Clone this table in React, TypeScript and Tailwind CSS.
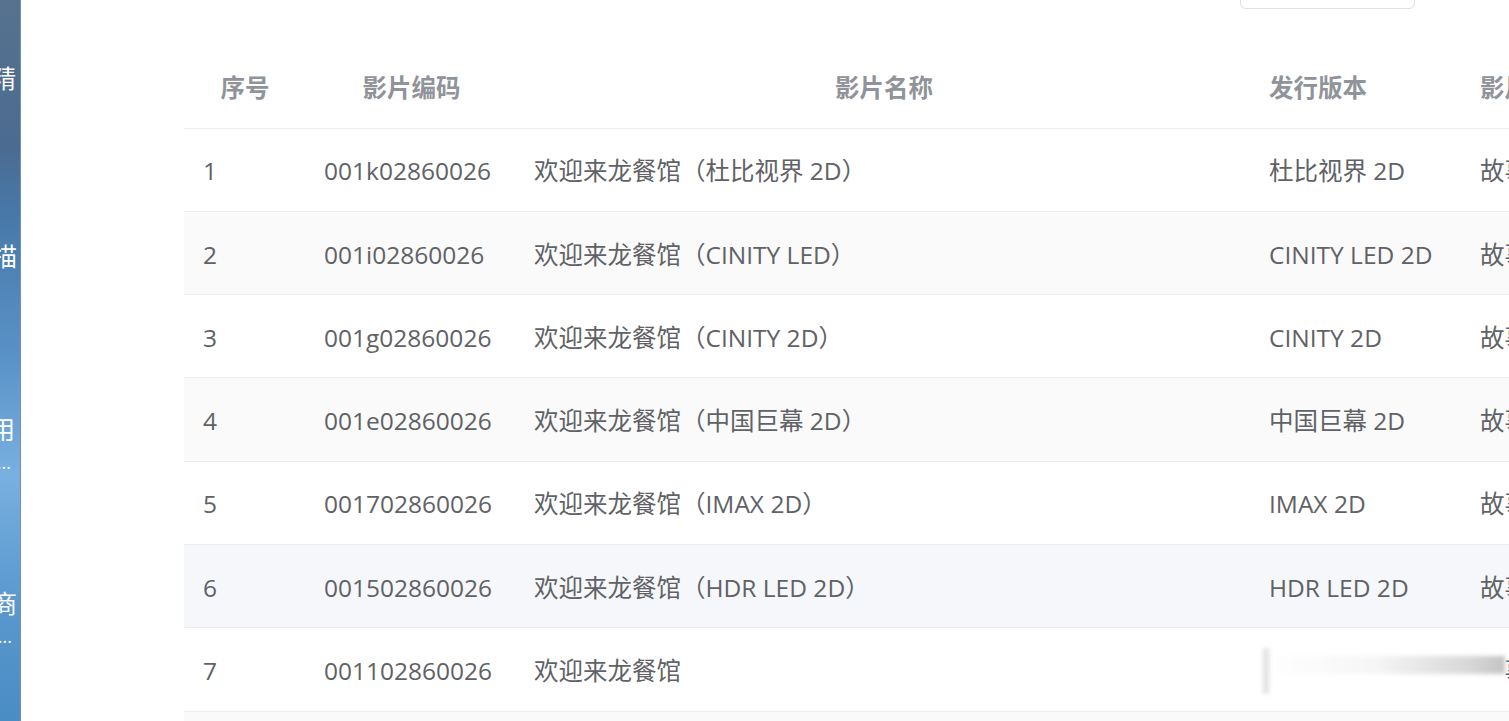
import React from 'react';

const rows = [
  { no: '1', code: '001k02860026', name: '欢迎来龙餐馆（杜比视界 2D）', ver: '杜比视界 2D', type: '故事片' },
  { no: '2', code: '001i02860026', name: '欢迎来龙餐馆（CINITY LED）', ver: 'CINITY LED 2D', type: '故事片' },
  { no: '3', code: '001g02860026', name: '欢迎来龙餐馆（CINITY 2D）', ver: 'CINITY 2D', type: '故事片' },
  { no: '4', code: '001e02860026', name: '欢迎来龙餐馆（中国巨幕 2D）', ver: '中国巨幕 2D', type: '故事片' },
  { no: '5', code: '001702860026', name: '欢迎来龙餐馆（IMAX 2D）', ver: 'IMAX 2D', type: '故事片' },
  { no: '6', code: '001502860026', name: '欢迎来龙餐馆（HDR LED 2D）', ver: 'HDR LED 2D', type: '故事片' },
  { no: '7', code: '001102860026', name: '欢迎来龙餐馆', ver: '', type: '故事片' },
  { no: '8', code: '000z02860026', name: '欢迎来龙餐馆（中国巨幕 2D）', ver: '中国巨幕 2D', type: '故事片' },
];

export default function App() {
  return (
    <div
      className="flex h-[721px] w-[1509px] overflow-hidden bg-white text-[24.5px] text-[#606266]"
      style={{ fontFamily: '"Open Sans", "Noto Sans CJK SC", sans-serif' }}
    >
      {/* Sidebar (clipped) */}
      <aside className="flex w-[21px] shrink-0 flex-col overflow-hidden border-r border-[#6f93b8] bg-[linear-gradient(180deg,#56728f_0%,#4b6b90_20%,#4878aa_30%,#5a93c8_50%,#78b0e0_66%,#5c9ad0_82%,#4a8cc4_100%)] text-white">
        <div className="mt-[62px] flex h-[34px] justify-end whitespace-nowrap pr-[4px] leading-[34px]">影片精</div>
        <div className="mt-[144px] flex h-[34px] justify-end whitespace-nowrap pr-[3px] leading-[34px]">影片描</div>
        <div className="mt-[140px] flex flex-col items-end whitespace-nowrap leading-[32px]">
          <div className="pr-[5px]">常用</div>
          <div className="pr-[9px] text-[18px]">功能...</div>
        </div>
        <div className="mt-[110px] flex flex-col items-end whitespace-nowrap leading-[32px]">
          <div className="pr-[3px]">供应商</div>
          <div className="pr-[8px] text-[18px]">合作...</div>
        </div>
      </aside>

      {/* Main */}
      <main className="flex min-w-0 flex-1 flex-col pl-[163px]">
        <div className="h-[46px] shrink-0">
          <div className="-mt-[31px] ml-[1056px] h-[40px] w-[175px] rounded-[6px] border border-[#dcdfe6] bg-white" />
        </div>

        <table className="w-[1477px] table-fixed border-collapse">
          <colgroup>
            <col className="w-[122px]" />
            <col className="w-[211px]" />
            <col className="w-[734px]" />
            <col className="w-[210px]" />
            <col className="w-[200px]" />
          </colgroup>
          <thead>
            <tr className="h-[82px] border-b border-[#ebeef5] font-bold text-[#909399]">
              <th className="pt-[4px] text-center font-bold">序号</th>
              <th className="pt-[4px] text-center font-bold">影片编码</th>
              <th className="pt-[4px] text-center font-bold">影片名称</th>
              <th className="pt-[4px] pl-[18px] text-left font-bold">发行版本</th>
              <th className="pt-[4px] pl-[19px] text-left font-bold whitespace-nowrap">影片类型</th>
            </tr>
          </thead>
          <tbody>
            {rows.map((r, i) => (
              <tr
                key={r.no}
                className={
                  'h-[83.3px] border-b border-[#ebeef5] ' +
                  (i === 5 ? 'bg-[#f5f7fa]' : i % 2 === 1 ? 'bg-[#fafafa]' : 'bg-white')
                }
              >
                <td className="pt-[4px] pl-[19px] whitespace-nowrap">{r.no}</td>
                <td className="pt-[4px] pl-[18px] whitespace-nowrap">{r.code}</td>
                <td className="pt-[4px] pl-[17px] whitespace-nowrap">{r.name}</td>
                <td className="relative pt-[4px] pl-[18px] whitespace-nowrap">
                  {r.ver}
                  {i === 6 && (
                    <div className="absolute left-[4px] top-[14px] z-10 h-[58px] w-[250px]">
                      <div className="absolute inset-0 bg-white" />
                      <div className="absolute left-[10px] top-[14px] h-[18px] w-[240px] bg-[linear-gradient(90deg,rgba(255,255,255,0)_0%,#f6f6f6_45%,#d8d8d8_85%,#c4c4c4_100%)] blur-[2px]" />
                      <div className="absolute left-[8px] top-[6px] h-[46px] w-[6px] bg-[#e2e2e2] blur-[2px]" />
                    </div>
                  )}
                </td>
                <td className="pt-[4px] pl-[19px] whitespace-nowrap">{r.type}</td>
              </tr>
            ))}
          </tbody>
        </table>
      </main>
    </div>
  );
}
